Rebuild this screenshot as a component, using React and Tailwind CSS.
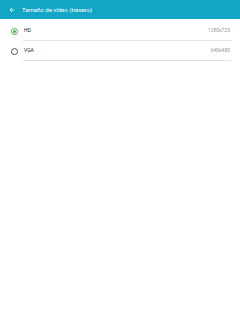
export default function App() {
  const rows = [
    { label: "HD", value: "1280x720", checked: true },
    { label: "VGA", value: "640x480", checked: false },
  ];
  return (
    <div className="w-[240px] h-[320px] bg-white" style={{ fontFamily: "Roboto, 'Noto Sans', sans-serif" }}>
      <div className="h-[19px] bg-[#12a5c6] flex items-center pl-[9px]">
        <svg width="6" height="6" viewBox="0 0 8 8" className="mr-[7px]">
          <path d="M7 4H1.5M4 1.3L1.3 4L4 6.7" stroke="#dff3f8" strokeWidth="1.2" fill="none" />
        </svg>
        <span className="text-[6px] text-white">Tamaño de vídeo (trasero)</span>
      </div>
      <div className="pt-[2px]">
        {rows.map((r) => (
          <div key={r.label} className="flex items-center h-[20px]">
            <div className="w-[23px] flex justify-center pl-[5px]">
              {r.checked ? (
                <div className="w-[7px] h-[7px] rounded-full border border-[#4caf50] flex items-center justify-center">
                  <div className="w-[3px] h-[3px] rounded-full bg-[#4caf50]" />
                </div>
              ) : (
                <div className="w-[7px] h-[7px] rounded-full border border-[#555]" />
              )}
            </div>
            <div className="flex-1 h-full flex items-center justify-between border-b border-[#e2e2e2] mr-[9px] pl-[1px] pr-[1px]">
              <span className="text-[5px] text-[#222]">{r.label}</span>
              <span className="text-[5px] text-[#999]">{r.value}</span>
            </div>
          </div>
        ))}
      </div>
    </div>
  );
}
